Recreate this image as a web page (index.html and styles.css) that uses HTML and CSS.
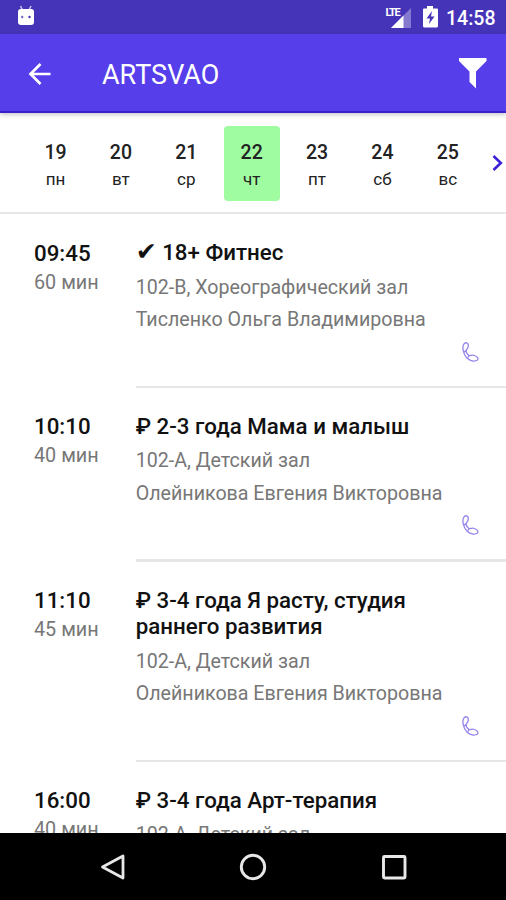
FILE: index.html
```html
<!DOCTYPE html>
<html lang="ru">
<head>
<meta charset="utf-8">
<title>ARTSVAO</title>
<link rel="stylesheet" href="styles.css">
</head>
<body>
<svg class="defs" width="0" height="0">
  <symbol id="phone" viewBox="0 0 20 22">
    <path d="M3.200 2.700C5.200.7 7.800 2.200 7.300 5.200C7 7.500 5.500 8.500 5 9.500C5 11.500 6.500 13.500 8 14.500C9.500 14.800 11.500 13.500 13.500 14.500C16 15.500 18 17.500 16.500 19C13.500 21 9 20 6 17C2.500 13.500.5 6 3.200 2.700ZM5 9.500L3.200 11M8 14.500L7 16.500" fill="none" stroke="#9384ec" stroke-width="1.300" stroke-linejoin="round"/>
  </symbol>
</svg>
<div class="screen">
  <div class="status">
    <svg class="android" width="18" height="22" viewBox="0 0 18 22"><path d="M3.500 1l2 4M14 1l-2 4" stroke="#c9c3f0" stroke-width="1.500"/><path d="M1 6.500Q1 4 4 4h10q3 0 3 2.500V17q0 3-3 3H4q-3 0-3-3z" fill="#fff"/><circle cx="5.200" cy="12" r="1.200" fill="#7568cc"/><circle cx="12.500" cy="12" r="1.200" fill="#4533b8"/></svg>
    <div class="status-right">
      <div class="signal"><span class="lte">LTE</span><svg width="20" height="20" viewBox="0 0 20 20"><path d="M0 20L20 0v20z" fill="#8579d0"/><path d="M0 20L12.500 7.500V20z" fill="#fff"/></svg></div>
      <svg class="battery" width="15" height="22" viewBox="0 0 15 22"><path d="M4 0h6v2.500h4a1 1 0 0 1 1 1V20a1.500 1.500 0 0 1-1.500 1.500h-12A1.500 1.500 0 0 1 0 20V3.500a1 1 0 0 1 1-1h3z" fill="#fff"/><path d="M9 5L3.500 12.500H7L6 18l5.500-7.500H8z" fill="#4533b8"/></svg>
      <span class="clock">14:58</span>
    </div>
  </div>
  <header class="bar">
    <svg class="back" width="24" height="24" viewBox="0 0 24 24"><path d="M23.500 12H2.500M13.500 2L3.500 12L13.500 22" fill="none" stroke="#fff" stroke-width="2.700"/></svg>
    <h1>ARTSVAO</h1>
    <svg class="filter" width="28" height="31" viewBox="0 0 28 31"><path d="M0 0h27.500v3L17 13.500V30.500L10.500 24V13.500L0 3z" fill="#fff"/></svg>
  </header>
  <nav class="days">
    <div class="day"><b>19</b><span>пн</span></div>
    <div class="day"><b>20</b><span>вт</span></div>
    <div class="day"><b>21</b><span>ср</span></div>
    <div class="day active"><b>22</b><span>чт</span></div>
    <div class="day"><b>23</b><span>пт</span></div>
    <div class="day"><b>24</b><span>сб</span></div>
    <div class="day"><b>25</b><span>вс</span></div>
    <svg class="next" width="11" height="18" viewBox="0 0 11 18"><path d="M1.500 2L8.800 9L1.500 16" fill="none" stroke="#3b20d8" stroke-width="2.600"/></svg>
  </nav>
  <main class="list">
    <article class="item">
      <div class="when"><div class="time">09:45</div><div class="dur">60 мин</div></div>
      <div class="info"><h2><span class="check">✔</span> 18+ Фитнес</h2><p>102-В, Хореографический зал</p><p>Тисленко Ольга Владимировна</p><svg class="phone"><use href="#phone"/></svg></div>
    </article>
    <article class="item">
      <div class="when"><div class="time">10:10</div><div class="dur">40 мин</div></div>
      <div class="info"><h2>₽ 2-3 года Мама и малыш</h2><p>102-А, Детский зал</p><p>Олейникова Евгения Викторовна</p><svg class="phone"><use href="#phone"/></svg></div>
    </article>
    <article class="item">
      <div class="when"><div class="time">11:10</div><div class="dur">45 мин</div></div>
      <div class="info"><h2>₽ 3-4 года Я расту, студия<br>раннего развития</h2><p>102-А, Детский зал</p><p>Олейникова Евгения Викторовна</p><svg class="phone"><use href="#phone"/></svg></div>
    </article>
    <article class="item">
      <div class="when"><div class="time">16:00</div><div class="dur">40 мин</div></div>
      <div class="info"><h2>₽ 3-4 года Арт-терапия</h2><p>102-А, Детский зал</p></div>
    </article>
  </main>
  <footer class="softkeys">
    <svg width="28" height="28" viewBox="0 0 28 28"><path d="M3.500 14L24 3V25z" fill="none" stroke="#e8e8e8" stroke-width="2.800" stroke-linejoin="round"/></svg>
    <svg width="28" height="28" viewBox="0 0 28 28"><circle cx="14" cy="14" r="11.700" fill="none" stroke="#e8e8e8" stroke-width="2.900"/></svg>
    <svg width="28" height="28" viewBox="0 0 28 28"><rect x="3.500" y="3.500" width="21.500" height="21.500" rx="1" fill="none" stroke="#e8e8e8" stroke-width="2.900"/></svg>
  </footer>
</div>
</body>
</html>
```
FILE: styles.css
```css
* { box-sizing: border-box; }
body { margin: 0; font-family: Roboto, "DejaVu Sans", sans-serif; background: #fff; color: #111; }
h1, h2, p { margin: 0; }
svg { display: block; flex: none; }
.defs { display: none; }
.screen { width: 506px; height: 900px; display: flex; flex-direction: column; overflow: hidden; }
.status { height: 34px; flex: none; background: #4533b8; display: flex; justify-content: space-between; padding: 0 11px 0 17px; }
.android { margin-top: 5px; }
.status-right { display: flex; color: #fff; }
.signal { display: flex; margin-top: 8px; }
.lte { font-size: 11px; font-weight: 700; line-height: 9px; letter-spacing: -1.300px; width: 5px; white-space: nowrap; }
.battery { margin: 6px 0 0 12px; }
.clock { font-size: 19.500px; font-weight: 500; line-height: 37px; margin-left: 8.500px; margin-right: -0.500px; }
.bar { height: 79px; flex: none; background: #563eea; border-bottom: 2px solid #3a20cf; display: flex; padding-left: 27px; color: #fff; position: relative; box-shadow: 0 2px 4px rgba(0, 0, 0, .2); }
.back { margin-top: 28px; }
.bar h1 { font-size: 27px; font-weight: 400; line-height: 33px; margin: 25px 0 0 51px; }
.filter { margin: 24px 19px 0 auto; }
.days { height: 101.400px; flex: none; display: flex; align-items: flex-start; padding: 13px 0 0 27.500px; gap: 9.400px; border-bottom: 2px solid #e7e7e7; }
.day { width: 56px; height: 75px; flex: none; border-radius: 4px; text-align: center; padding-top: 12.500px; color: #222; }
.day b, .day span { display: block; }
.day b { font-size: 19.500px; font-weight: 500; line-height: 27px; }
.day span { font-size: 17px; line-height: 24px; margin-top: 1px; }
.active { background: #a0fca1; }
.next { margin: 28px 0 0 7px; }
.list { flex: 1; min-height: 0; overflow: hidden; }
.item { display: flex; padding-left: 34px; }
.when { width: 101.700px; flex: none; padding-top: 25.400px; }
.time { font-size: 22.300px; font-weight: 500; line-height: 27px; }
.dur { font-size: 19.800px; line-height: 31px; color: #777; }
.info { flex: 1; padding-top: 25.100px; }
.info::after { content: ""; display: block; height: 2.500px; background: #e6e6e6; }
.info h2 { font-size: 22.300px; font-weight: 500; line-height: 26.600px; white-space: nowrap; margin-bottom: 5.500px; }
.check { font-family: "DejaVu Sans", sans-serif; font-size: 25px; line-height: 20px; }
.info p { font-size: 19.650px; line-height: 32.300px; color: #777; white-space: nowrap; }
.phone { width: 20px; height: 22px; margin: 4.500px 25.500px 22.900px auto; }
.softkeys { height: 67px; flex: none; background: #000; display: flex; justify-content: center; align-items: center; gap: 112.500px; }
```
